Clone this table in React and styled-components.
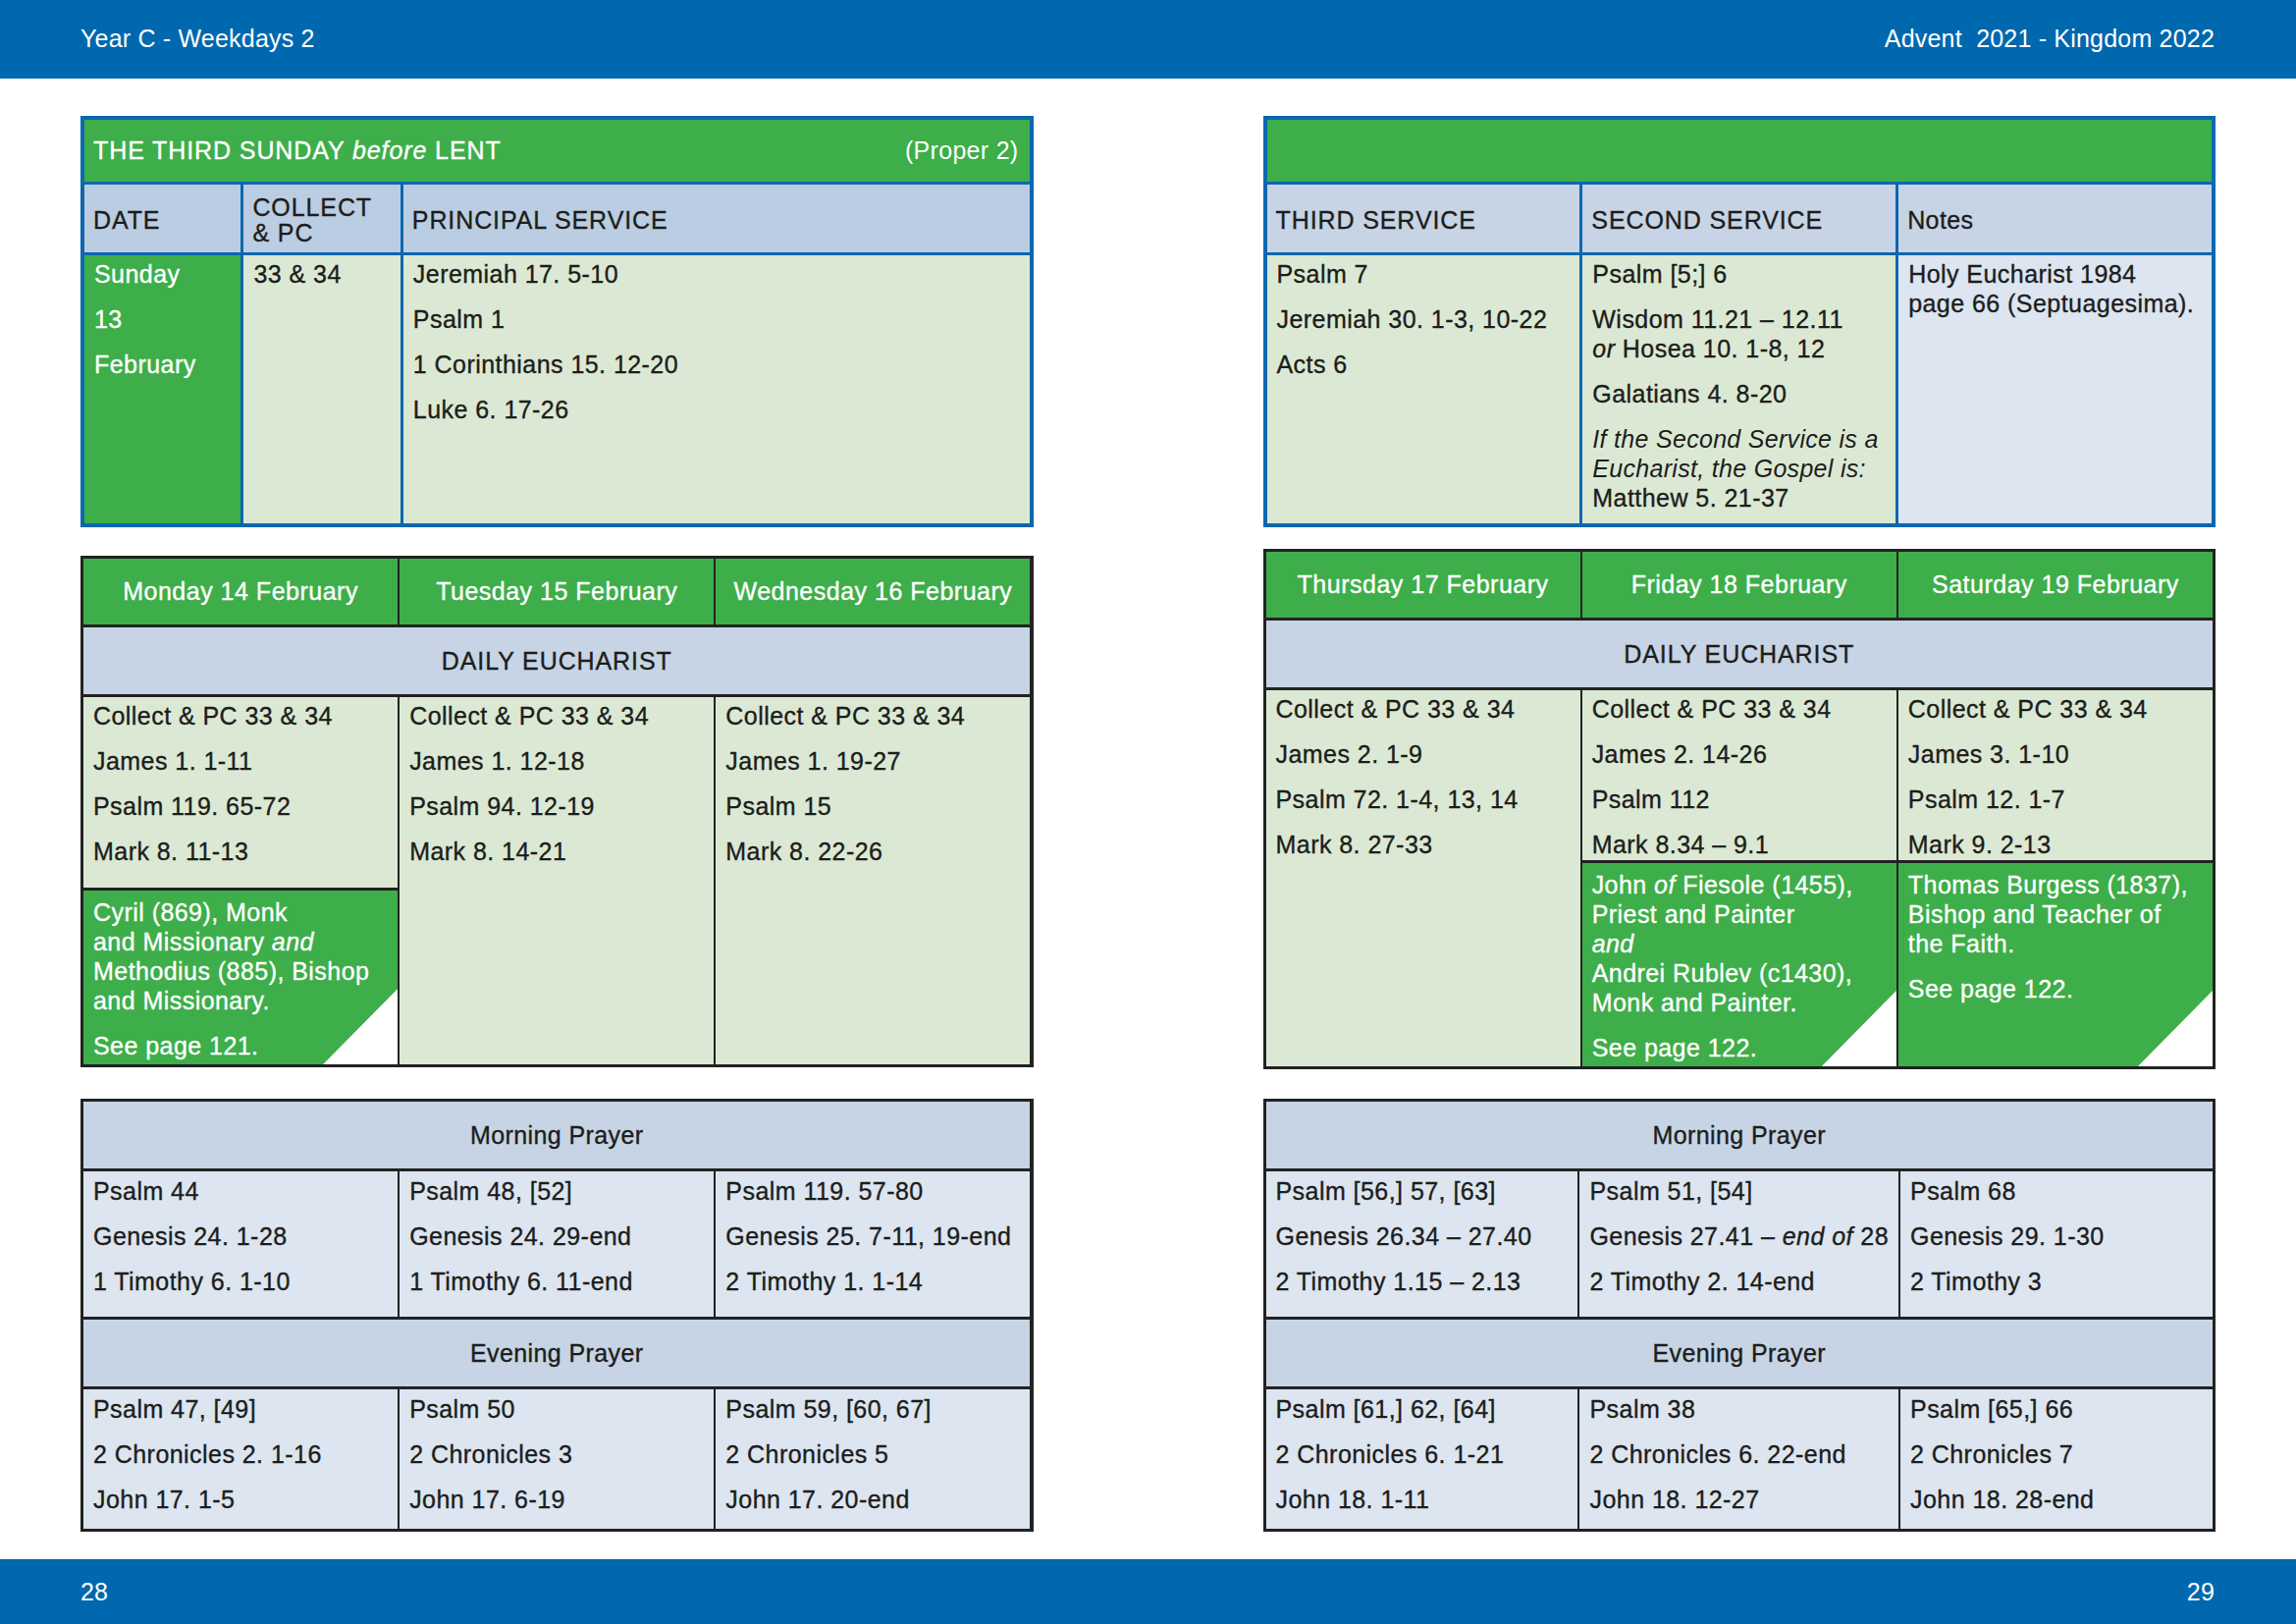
import styled, { createGlobalStyle } from "styled-components";

const GlobalStyle = createGlobalStyle`
  * {
    box-sizing: border-box;
  }
  html,
  body {
    margin: 0;
    padding: 0;
    background: #ffffff;
  }
  body {
    font-family: "Liberation Sans", Arial, Helvetica, sans-serif;
    color: #1d1d1b;
  }
`;

const Sheet = styled.div`
  width: 2339px;
  height: 1654px;
  display: flex;
  flex-direction: column;
  overflow: hidden;
`;

const Bar = styled.div`
  flex: none;
  height: ${(p) => p.$height}px;
  padding: 0 83px ${(p) => p.$lift || 0}px 82px;
  background: #0068ae;
  color: #ffffff;
  display: flex;
  align-items: center;
  justify-content: space-between;
  font-size: 25px;
  letter-spacing: 0.2px;
  white-space: pre;
`;

const Spread = styled.div`
  flex: 1;
  display: grid;
  grid-template-columns: 1fr 1fr;
  -webkit-text-stroke-width: 0.35px;
`;

const Column = styled.div`
  display: flex;
  flex-direction: column;
  padding: ${(p) => (p.$side === "left" ? "38px 117px 0 82px" : "38px 82px 0 117px")};
`;

const Table = styled.div`
  flex: none;
  display: grid;
  grid-template-columns: ${(p) => p.$cols || "repeat(3, 1fr)"};
  grid-template-rows: ${(p) => p.$rows};
  row-gap: 3px;
  column-gap: ${(p) => p.$colGap || 3}px;
  padding: ${(p) => p.$edge || 3}px;
  height: ${(p) => p.$height}px;
  margin-top: ${(p) => p.$top || 0}px;
  background: ${(p) => p.$line};
`;

const Title = styled.div`
  grid-column: 1 / -1;
  background: #3dae49;
  color: #ffffff;
  display: flex;
  align-items: center;
  justify-content: space-between;
  padding: 0 11px 0 9px;
  font-size: 25px;
  letter-spacing: 0.9px;
`;

const Proper = styled.span`
  letter-spacing: 0.3px;
  -webkit-text-stroke-width: 0;
`;

const Head = styled.div`
  background: ${(p) => p.$bg};
  display: flex;
  align-items: center;
  padding: 2px 9px 0;
  font-size: 25px;
  line-height: 26px;
  letter-spacing: ${(p) => (p.$caps ? 0.9 : 0.4)}px;
`;

const Day = styled.div`
  background: #3dae49;
  color: #ffffff;
  display: flex;
  align-items: center;
  justify-content: center;
  font-size: 25px;
  letter-spacing: 0.5px;
  white-space: nowrap;
`;

const Band = styled.div`
  grid-column: 1 / -1;
  background: #c6d4e5;
  display: flex;
  align-items: center;
  justify-content: center;
  font-size: 25px;
  letter-spacing: ${(p) => (p.$caps ? 0.9 : 0.4)}px;
`;

const List = styled.div`
  grid-row: ${(p) => p.$row || "auto"};
  grid-column: ${(p) => p.$col || "auto"};
  background: ${(p) => p.$bg};
  color: ${(p) => (p.$light ? "#ffffff" : "#1d1d1b")};
  padding: ${(p) => p.$pad || 6}px 10px 0;
  font-size: 25px;
  letter-spacing: 0.45px;
  white-space: nowrap;
  min-height: 0;
`;

const Entry = styled.div`
  line-height: 30px;
  margin-bottom: 16px;

  &:last-child {
    margin-bottom: 0;
  }
`;

const Aside = styled.span`
  font-style: italic;
  -webkit-text-stroke-width: 0;
  letter-spacing: 0.3px;
`;

const Memorial = styled.div`
  position: relative;
  grid-row: 4;
  grid-column: ${(p) => p.$col};
  background: #3dae49;
  color: #ffffff;
  padding: 7px 10px 4px;
  font-size: 25px;
  letter-spacing: 0.45px;
  white-space: nowrap;

  &::after {
    content: "";
    position: absolute;
    right: 0;
    bottom: 0;
    width: 76px;
    height: 77px;
    background: #ffffff;
    clip-path: polygon(100% 0, 100% 100%, 0 100%);
  }
`;

const GREEN_LIGHT = "#dbe9d4";
const BLUE_LIGHT = "#dce5f0";

const leftDays = [
  {
    name: "Monday 14 February",
    readings: ["Collect & PC 33 & 34", "James 1. 1-11", "Psalm 119. 65-72", "Mark 8. 11-13"],
    memorial: [
      <>
        Cyril (869), Monk
        <br />
        and Missionary <i>and</i>
        <br />
        Methodius (885), Bishop
        <br />
        and Missionary.
      </>,
      "See page 121.",
    ],
  },
  {
    name: "Tuesday 15 February",
    readings: ["Collect & PC 33 & 34", "James 1. 12-18", "Psalm 94. 12-19", "Mark 8. 14-21"],
  },
  {
    name: "Wednesday 16 February",
    readings: ["Collect & PC 33 & 34", "James 1. 19-27", "Psalm 15", "Mark 8. 22-26"],
  },
];

const rightDays = [
  {
    name: "Thursday 17 February",
    readings: ["Collect & PC 33 & 34", "James 2. 1-9", "Psalm 72. 1-4, 13, 14", "Mark 8. 27-33"],
  },
  {
    name: "Friday 18 February",
    readings: ["Collect & PC 33 & 34", "James 2. 14-26", "Psalm 112", "Mark 8.34 – 9.1"],
    memorial: [
      <>
        John <i>of</i> Fiesole (1455),
        <br />
        Priest and Painter
        <br />
        <i>and</i>
        <br />
        Andrei Rublev (c1430),
        <br />
        Monk and Painter.
      </>,
      "See page 122.",
    ],
  },
  {
    name: "Saturday 19 February",
    readings: ["Collect & PC 33 & 34", "James 3. 1-10", "Psalm 12. 1-7", "Mark 9. 2-13"],
    memorial: [
      <>
        Thomas Burgess (1837),
        <br />
        Bishop and Teacher of
        <br />
        the Faith.
      </>,
      "See page 122.",
    ],
  },
];

const leftPrayer = {
  morning: [
    ["Psalm 44", "Genesis 24. 1-28", "1 Timothy 6. 1-10"],
    ["Psalm 48, [52]", "Genesis 24. 29-end", "1 Timothy 6. 11-end"],
    ["Psalm 119. 57-80", "Genesis 25. 7-11, 19-end", "2 Timothy 1. 1-14"],
  ],
  evening: [
    ["Psalm 47, [49]", "2 Chronicles 2. 1-16", "John 17. 1-5"],
    ["Psalm 50", "2 Chronicles 3", "John 17. 6-19"],
    ["Psalm 59, [60, 67]", "2 Chronicles 5", "John 17. 20-end"],
  ],
};

const rightPrayer = {
  morning: [
    ["Psalm [56,] 57, [63]", "Genesis 26.34 – 27.40", "2 Timothy 1.15 – 2.13"],
    [
      "Psalm 51, [54]",
      <>
        Genesis 27.41 – <i>end of</i> 28
      </>,
      "2 Timothy 2. 14-end",
    ],
    ["Psalm 68", "Genesis 29. 1-30", "2 Timothy 3"],
  ],
  evening: [
    ["Psalm [61,] 62, [64]", "2 Chronicles 6. 1-21", "John 18. 1-11"],
    ["Psalm 38", "2 Chronicles 6. 22-end", "John 18. 12-27"],
    ["Psalm [65,] 66", "2 Chronicles 7", "John 18. 28-end"],
  ],
};

const Entries = ({ items }) => items.map((item, i) => <Entry key={i}>{item}</Entry>);

const WeekTable = ({ days, top, height }) => (
  <Table
    $line="#222222"
    $rows="67px 68px minmax(0, 1fr) auto"
    $colGap={2}
    $top={top}
    $height={height}
  >
    {days.map((d) => (
      <Day key={d.name}>{d.name}</Day>
    ))}
    <Band $caps>DAILY EUCHARIST</Band>
    {days.map((d, i) => (
      <List key={d.name} $bg={GREEN_LIGHT} $pad={4} $col={i + 1} $row={d.memorial ? "3" : "3 / span 2"}>
        <Entries items={d.readings} />
      </List>
    ))}
    {days.map((d, i) =>
      d.memorial ? (
        <Memorial key={d.name} $col={i + 1}>
          <Entries items={d.memorial} />
        </Memorial>
      ) : null
    )}
  </Table>
);

const PrayerTable = ({ data, top }) => (
  <Table $line="#222222" $rows="68px 148px 68px 1fr" $colGap={2} $top={top} $height={441}>
    <Band>Morning Prayer</Band>
    {data.morning.map((items, i) => (
      <List key={i} $bg={BLUE_LIGHT} $pad={5}>
        <Entries items={items} />
      </List>
    ))}
    <Band>Evening Prayer</Band>
    {data.evening.map((items, i) => (
      <List key={i} $bg={BLUE_LIGHT} $pad={5}>
        <Entries items={items} />
      </List>
    ))}
  </Table>
);

const App = () => {
  return (
    <>
      <GlobalStyle />
      <Sheet>
        <Bar $height={80} $lift={2}>
          <span>Year C - Weekdays 2</span>
          <span>Advent  2021 - Kingdom 2022</span>
        </Bar>
        <Spread>
          <Column $side="left">
            <Table $line="#0d67af" $cols="1fr 1fr 4fr" $rows="63px 69px 1fr" $edge={4} $height={419}>
              <Title>
                <span>
                  THE THIRD SUNDAY <i>before</i> LENT
                </span>
                <Proper>(Proper 2)</Proper>
              </Title>
              <Head $bg="#bbcde3" $caps>DATE</Head>
              <Head $bg="#bbcde3" $caps>
                COLLECT
                <br />& PC
              </Head>
              <Head $bg="#bbcde3" $caps>PRINCIPAL SERVICE</Head>
              <List $bg="#3dae49" $light $pad={4}>
                <Entries items={["Sunday", "13", "February"]} />
              </List>
              <List $bg={GREEN_LIGHT} $pad={4}>
                <Entries items={["33 & 34"]} />
              </List>
              <List $bg={GREEN_LIGHT} $pad={4}>
                <Entries items={["Jeremiah 17. 5-10", "Psalm 1", "1 Corinthians 15. 12-20", "Luke 6. 17-26"]} />
              </List>
            </Table>
            <WeekTable days={leftDays} top={29} height={521} />
            <PrayerTable data={leftPrayer} top={32} />
          </Column>

          <Column $side="right">
            <Table $line="#0d67af" $rows="63px 69px 1fr" $edge={4} $height={419}>
              <Title />
              <Head $bg="#c6d4e5" $caps>THIRD SERVICE</Head>
              <Head $bg="#c6d4e5" $caps>SECOND SERVICE</Head>
              <Head $bg="#c6d4e5">Notes</Head>
              <List $bg={GREEN_LIGHT} $pad={4}>
                <Entries items={["Psalm 7", "Jeremiah 30. 1-3, 10-22", "Acts 6"]} />
              </List>
              <List $bg={GREEN_LIGHT} $pad={4}>
                <Entries
                  items={[
                    "Psalm [5;] 6",
                    <>
                      Wisdom 11.21 – 12.11
                      <br />
                      <i>or</i> Hosea 10. 1-8, 12
                    </>,
                    "Galatians 4. 8-20",
                    <>
                      <Aside>
                        If the Second Service is a
                        <br />
                        Eucharist, the Gospel is:
                      </Aside>
                      <br />
                      Matthew 5. 21-37
                    </>,
                  ]}
                />
              </List>
              <List $bg={BLUE_LIGHT} $pad={4}>
                <Entries
                  items={[
                    <>
                      Holy Eucharist 1984
                      <br />
                      page 66 (Septuagesima).
                    </>,
                  ]}
                />
              </List>
            </Table>
            <WeekTable days={rightDays} top={22} height={530} />
            <PrayerTable data={rightPrayer} top={30} />
          </Column>
        </Spread>
        <Bar $height={66}>
          <span>28</span>
          <span>29</span>
        </Bar>
      </Sheet>
    </>
  );
};

export default App;
